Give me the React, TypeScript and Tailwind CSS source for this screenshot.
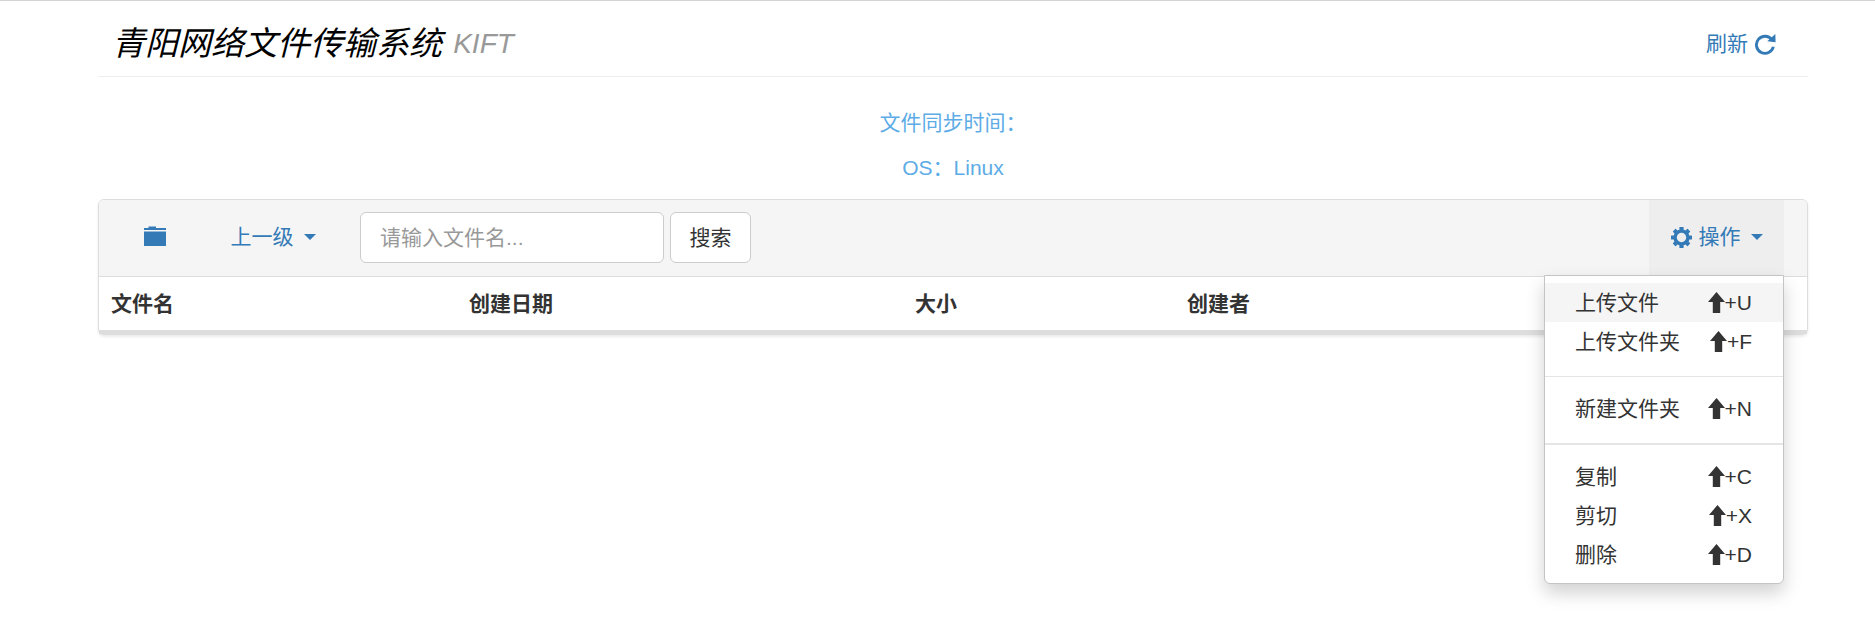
const FONT = "font-['Liberation_Sans','Noto_Sans_CJK_SC',sans-serif]";

const COG_TEETH = [0, 45, 90, 135];

const Caret = () => (
  <span className="ml-[10px] inline-block h-0 w-0 border-x-[6px] border-t-[6px] border-x-transparent border-t-[#337ab7] align-middle" />
);

const ArrowUp = () => (
  <svg viewBox="0 0 17 21" className="h-[21px] w-[17px] fill-[#333]">
    <path d="M8.5 0 L17 10 H12.2 V21 H4.8 V10 H0 Z" />
  </svg>
);

const FolderIcon = () => (
  <svg viewBox="0 0 22 20" className="h-[20px] w-[22px] fill-[#337ab7]">
    <path d="M0 5.5 H22 V20 H0 Z" />
    <path d="M4.5 0.5 H12 V2 H22 V4 H0 V2 H4.5 Z" />
  </svg>
);

const CogIcon = () => (
  <svg viewBox="0 0 21 21" className="h-[21px] w-[21px]">
    <circle cx="10.5" cy="10.5" r="6.4" fill="none" stroke="#337ab7" strokeWidth="3.4" />
    {COG_TEETH.map((deg) => (
      <rect key={deg} x="8.4" y="0" width="4.2" height="21" rx="0.6" fill="#337ab7" transform={`rotate(${deg} 10.5 10.5)`} />
    ))}
    <circle cx="10.5" cy="10.5" r="4.7" fill="#eee" />
  </svg>
);

const RefreshIcon = () => (
  <svg viewBox="0 0 20 20" className="h-[22px] w-[22px]">
    <path d="M16.2 6 A7.8 7.8 0 1 0 17.6 12.5" fill="none" stroke="#337ab7" strokeWidth="2.6" />
    <path d="M12 7.6 L19.6 8.4 L19.4 1 Z" fill="#337ab7" />
  </svg>
);

const Shortcut = ({ letter }: { letter: string }) => (
  <span className="flex items-center text-[21px] text-[#333]">
    <ArrowUp />+{letter}
  </span>
);

const MenuItem = ({ label, letter, active }: { label: string; letter: string; active?: boolean }) => (
  <li className={`flex h-[39px] items-center justify-between pl-[30px] pr-[31px] text-[#333] ${active ? "bg-[#f5f5f5]" : ""}`}>
    <span>{label}</span>
    <Shortcut letter={letter} />
  </li>
);

const App = () => {
  return (
    <div className={`${FONT} min-h-[625px] border-t border-t-[#d4d4d4] bg-white text-[21px] text-[#333]`}>
      <div className="mx-[98px] w-[1710px]">
        <header className="flex h-[76px] items-center justify-between border-b border-[#eee] pl-[14px] pr-[32px] pt-[10px]">
          <h1 className="text-[33px] font-normal italic text-black">
            青阳网络文件传输系统 <small className="ml-[2px] align-[2px] text-[28px] text-[#999]">KIFT</small>
          </h1>
          <a className="flex items-center gap-[6px] text-[21px] text-[#337ab7]">
            刷新
            <RefreshIcon />
          </a>
        </header>

        <div className="flex h-[122px] flex-col items-center pt-[23px] text-[21px] text-[#5dace6]">
          <p className="flex h-[45px] items-center">文件同步时间：</p>
          <p className="flex h-[45px] items-center">OS：Linux</p>
        </div>

        <div className="relative rounded-[6px] border border-[#ddd] shadow-[0_2px_3px_rgba(0,0,0,0.08)]">
          <nav className="flex h-[77px] items-center rounded-t-[6px] border-b border-[#ddd] bg-[#f5f5f5]">
            <div className="flex w-[111px] justify-center pb-[5px]">
              <FolderIcon />
            </div>
            <a className="flex w-[126px] items-center justify-center whitespace-nowrap pb-[2px] text-[#337ab7]">
              上一级
              <Caret />
            </a>
            <input
              placeholder="请输入文件名..."
              className="ml-[24px] mb-[1px] h-[51px] w-[304px] rounded-[6px] border border-[#ccc] bg-white px-[19px] text-[21px] placeholder:text-[#999]"
            />
            <button className="ml-[6px] mb-[1px] h-[51px] w-[81px] rounded-[6px] border border-[#ccc] bg-white text-[21px] text-[#333]">
              搜索
            </button>
            <a className="ml-auto mr-[23px] flex h-full w-[135px] items-center justify-center bg-[#eee] pb-[2px] text-[#337ab7]">
              <CogIcon />
              <span className="ml-[7px]">操作</span>
              <Caret />
            </a>
          </nav>
          <div className="flex h-[57px] items-center border-b-[4px] border-[#ddd] text-[21px] font-bold">
            <span className="ml-[12px] w-[358px]">文件名</span>
            <span className="w-[446px]">创建日期</span>
            <span className="w-[272px]">大小</span>
            <span>创建者</span>
          </div>

          <ul className="absolute right-[23px] top-[75px] w-[240px] rounded-b-[6px] border border-[#c4c4c4] bg-white pb-[9px] pt-[7px] shadow-[0_9px_18px_rgba(0,0,0,0.18)]">
            <MenuItem label="上传文件" letter="U" active />
            <MenuItem label="上传文件夹" letter="F" />
            <li className="mb-[12px] mt-[15px] h-px bg-[#e5e5e5]" />
            <MenuItem label="新建文件夹" letter="N" />
            <li className="mb-[12px] mt-[15px] h-[2px] bg-[#e5e5e5]" />
            <MenuItem label="复制" letter="C" />
            <MenuItem label="剪切" letter="X" />
            <MenuItem label="删除" letter="D" />
          </ul>
        </div>
      </div>
    </div>
  );
};

export default App;
